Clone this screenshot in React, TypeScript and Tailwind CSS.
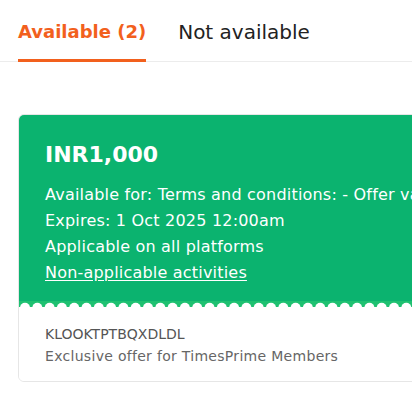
import React from "react";

export default function App() {
  const font = { fontFamily: "'DejaVu Sans', 'Noto Sans', sans-serif" };
  return (
    <div className="w-[412px] h-[412px] overflow-hidden bg-white" style={font}>
      <div className="flex items-end pl-[18px] pt-[18px] border-b border-[#ececec]">
        <div className="relative pb-[15px] mr-[32px]">
          <span className="block text-[18px] leading-[28px] font-bold text-[#f2601d] whitespace-nowrap">Available (2)</span>
          <div className="absolute left-0 right-0 bottom-[-1px] h-[3px] bg-[#f2601d]" />
        </div>
        <div className="pb-[15px]">
          <span className="block text-[20px] leading-[28px] text-[#222] whitespace-nowrap">Not available</span>
        </div>
      </div>
      <div className="ml-[18px] mt-[52px] w-[520px] rounded-[6px] border border-[#e6e6e6] overflow-hidden">
        <div className="bg-[#0bb36f] pl-[26px] pt-[25px] pb-[15px] text-white">
          <div className="text-[22px] leading-[30px] font-bold">INR1,000</div>
          <div className="mt-[12px] text-[16px] leading-[26px] whitespace-nowrap tracking-[0.2px]">
            <div>Available for: Terms and conditions: - Offer valid</div>
            <div>Expires: 1 Oct 2025 12:00am</div>
            <div>Applicable on all platforms</div>
            <div className="underline underline-offset-2">Non-applicable activities</div>
          </div>
        </div>
        <svg width="520" height="6" className="block" viewBox="0 0 520 6">
          <rect x="0" y="0" width="520" height="6" fill="#1fc171" />
          {Array.from({ length: 44 }).map((_, i) => (
            <circle key={i} cx={6 + i * 12.3} cy={6.8} r={5} fill="#ffffff" />
          ))}
        </svg>
        <div className="bg-white pl-[26px] pt-[16px] pb-[14px]">
          <div className="text-[14px] leading-[22px] text-[#555]">KLOOKTPTBQXDLDL</div>
          <div className="text-[14px] leading-[22px] text-[#666] tracking-[0.3px]">Exclusive offer for TimesPrime Members</div>
        </div>
      </div>
    </div>
  );
}
